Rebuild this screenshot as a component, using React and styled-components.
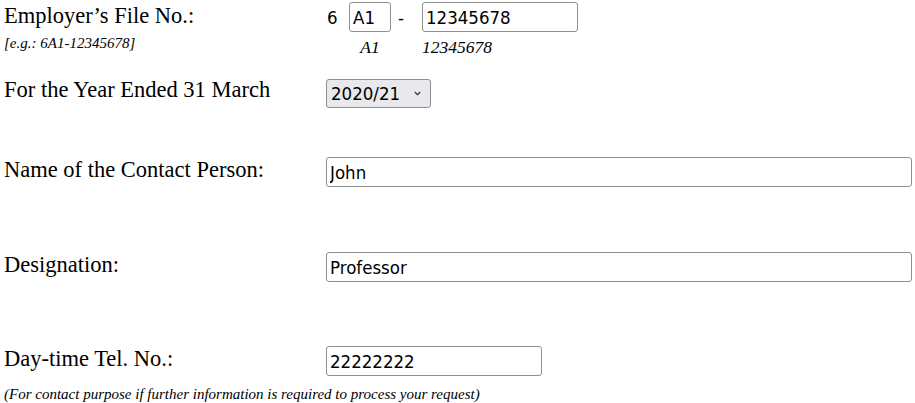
import React from 'react';
import styled, { createGlobalStyle } from 'styled-components';

const GlobalStyle = createGlobalStyle`
  body {
    margin: 0;
    background: #fff;
    color: #000;
    font-family: "Liberation Serif", "Times New Roman", serif;
  }
`;

const Form = styled.div`
  display: flex;
  flex-direction: column;
  padding: 0 3px 0 4px;
`;

const Row = styled.div`
  display: grid;
  grid-template-columns: 322px 1fr;
  align-items: start;
  height: ${p => (p.h ? `${p.h}px` : 'auto')};
  padding-top: ${p => p.top || 0}px;
  box-sizing: border-box;
`;

const Label = styled.div`
  font-size: 22.5px;
  line-height: 25px;
  margin-top: ${p => p.off || 0}px;
`;

const Cell = styled.div`
  margin-top: ${p => p.off || 0}px;
`;

const Hint = styled.div`
  font-size: 15px;
  line-height: 18px;
  font-style: italic;
  margin-top: 6px;
`;

const Note = styled.div`
  font-size: 15px;
  line-height: 18px;
  font-style: italic;
  margin-top: 9px;
`;

const FileLine = styled.div`
  display: flex;
  align-items: center;
  font-family: "DejaVu Sans Condensed", "DejaVu Sans", sans-serif;
  font-size: 18.5px;
`;

const Prefix = styled.span`
  width: 23px;
  padding-left: 1px;
  box-sizing: border-box;
`;

const Dash = styled.span`
  width: 31px;
  padding-left: 7px;
  box-sizing: border-box;
`;

const Input = styled.input`
  box-sizing: border-box;
  height: 30px;
  width: ${p => p.w || '100%'};
  border: 1px solid #8f8f8f;
  border-radius: 3px;
  padding: 0 3px;
  font-family: "DejaVu Sans Condensed", "DejaVu Sans", sans-serif;
  font-size: 18.5px;
  color: #000;
  background: #fff;
  outline: none;
`;

const SelectWrap = styled.div`
  position: relative;
  display: inline-block;
`;

const Select = styled.select`
  appearance: none;
  box-sizing: border-box;
  height: 29px;
  width: 105px;
  border: 1px solid #8f8f8f;
  border-radius: 3px;
  background: #e9e9ed;
  font-family: "DejaVu Sans Condensed", "DejaVu Sans", sans-serif;
  font-size: 18.5px;
  color: #000;
  padding: 0 0 0 4px;
  outline: none;
`;

const Chevron = styled.svg`
  position: absolute;
  right: 10px;
  top: 12px;
  width: 7px;
  height: 5px;
  pointer-events: none;
`;

const Sub = styled.div`
  display: flex;
  font-size: 17.5px;
  line-height: 20px;
  font-style: italic;
  margin-top: 5px;
`;

const SubItem = styled.span`
  width: ${p => p.w}px;
  text-align: ${p => p.align || 'left'};
`;

export default function App() {
  return (
    <>
      <GlobalStyle />
      <Form>
        <Row h={77} top={2}>
          <Label off={1}>
            Employer’s File No.:
            <Hint>[e.g.: 6A1-12345678]</Hint>
          </Label>
          <Cell>
            <FileLine>
              <Prefix>6</Prefix>
              <Input w="42px" defaultValue="A1" />
              <Dash>-</Dash>
              <Input w="156px" defaultValue="12345678" />
            </FileLine>
            <Sub>
              <SubItem w={23} />
              <SubItem w={42} align="center">A1</SubItem>
              <SubItem w={31} />
              <SubItem w={156}>12345678</SubItem>
            </Sub>
          </Cell>
        </Row>
        <Row h={79}>
          <Label>For the Year Ended 31 March</Label>
          <Cell off={2}>
            <SelectWrap>
              <Select defaultValue="2020/21">
                <option>2020/21</option>
                <option>2019/20</option>
              </Select>
              <Chevron viewBox="0 0 7 5">
                <path d="M0.8 1 L3.5 3.7 L6.2 1" fill="none" stroke="#333" strokeWidth="1.2" />
              </Chevron>
            </SelectWrap>
          </Cell>
        </Row>
        <Row h={95}>
          <Label off={1}>Name of the Contact Person:</Label>
          <Cell off={1}>
            <Input defaultValue="John" />
          </Cell>
        </Row>
        <Row h={94}>
          <Label off={1}>Designation:</Label>
          <Cell off={1}>
            <Input defaultValue="Professor" />
          </Cell>
        </Row>
        <Row>
          <Label off={1}>Day-time Tel. No.:</Label>
          <Cell off={1}>
            <Input w="216px" defaultValue="22222222" />
          </Cell>
        </Row>
        <Note>(For contact purpose if further information is required to process your request)</Note>
      </Form>
    </>
  );
}
